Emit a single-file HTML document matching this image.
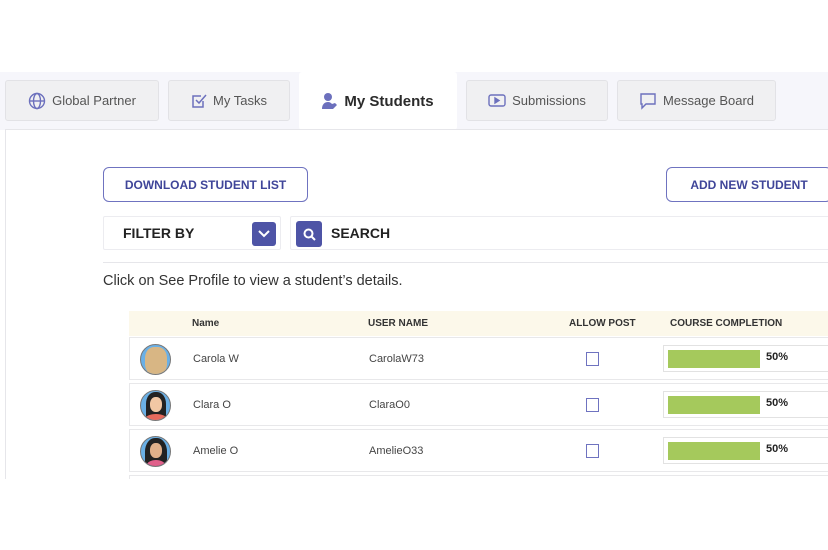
<!DOCTYPE html>
<html><head><meta charset="utf-8"><style>
*{box-sizing:border-box;margin:0;padding:0}
body{width:828px;height:550px;background:#fff;font-family:"Liberation Sans",sans-serif;position:relative;overflow:hidden}
.abs{position:absolute}
.bar{left:0;top:72px;width:828px;height:58px;background:#f6f6fb}
.tab{position:absolute;top:80px;height:41px;background:#f0f0f2;border:1px solid #e2e2e6;border-radius:3px;display:flex;align-items:center;justify-content:center;font-size:13px;color:#555;gap:6px}
.act{top:72px;height:58px;background:#fff;border:none;font-weight:bold;color:#2b2b2b;font-size:15px}
.panel{left:5px;top:129px;width:830px;height:350px;background:#fff;border-left:1px solid #e6e6ea;border-top:1px solid #e6e6ea}
.btn{position:absolute;top:167px;height:35px;border:1.5px solid #6f73c0;border-radius:6px;color:#3f4599;font-weight:bold;font-size:12px;display:flex;align-items:center;justify-content:center}
.box{position:absolute;top:216px;height:34px;border:1px solid #ececf0;border-radius:2px;font-weight:bold;font-size:14px;color:#222;display:flex;align-items:center}
.ib{background:#4e54a6;border-radius:3px;width:24px;height:24px;position:absolute;display:flex;align-items:center;justify-content:center}
.row{position:absolute;left:129px;width:710px;height:43px;border:1px solid #e8e8ea;font-size:11px;color:#444}
.row span{position:absolute;top:15px}
.cb{position:absolute;left:456px;top:14px;width:13px;height:14px;border:1.5px solid #6f73c0}
.pg{position:absolute;left:533px;top:7px;width:180px;height:27px;border:1px solid #e2e2e2}
.pg i{position:absolute;left:4px;top:4px;width:92px;height:18px;background:#a5c95c}
.pg b{position:absolute;left:102px;top:5px;font-size:11px;color:#222}
.av{position:absolute;left:10px;top:6px;width:31px;height:31px;border-radius:50%;background:#6ab0e6;border:1.5px solid #777;overflow:hidden}
</style></head><body>
<div class="abs bar"></div>
<div class="tab" style="left:5px;width:154px"><svg width="18" height="18" viewBox="0 0 18 18" fill="none" stroke="#6c70bd" stroke-width="1.4"><circle cx="9" cy="9" r="7.5"/><ellipse cx="9" cy="9" rx="3.5" ry="7.5"/><path d="M1.5 9h15"/></svg>Global Partner</div>
<div class="tab" style="left:168px;width:122px"><svg width="16" height="16" viewBox="0 0 16 16" fill="none" stroke="#6c70bd" stroke-width="1.5"><path d="M12 8v6H2V3h8"/><path d="M5 7l3 3 7-8"/></svg>My Tasks</div>
<div class="tab act" style="left:299px;width:158px"><svg width="16" height="18" viewBox="0 0 16 18" fill="#6c70bd"><circle cx="6" cy="5" r="4"/><path d="M0 17c0-5 3-7 6-7 2 0 3 1 4 2l3-1 2 2-4 4z"/></svg>My Students</div>
<div class="tab" style="left:466px;width:142px"><svg width="18" height="16" viewBox="0 0 18 16" fill="none" stroke="#6c70bd" stroke-width="1.4"><rect x="1" y="2" width="16" height="11" rx="2"/><path d="M7 5v5l4-2.5z" fill="#6c70bd"/></svg>Submissions</div>
<div class="tab" style="left:617px;width:159px"><svg width="18" height="18" viewBox="0 0 18 18" fill="none" stroke="#6c70bd" stroke-width="1.4"><path d="M2 2h14v10H7l-4 4v-4H2z"/></svg>Message Board</div>
<div class="abs panel"></div>
<div class="btn" style="left:103px;width:205px">DOWNLOAD STUDENT LIST</div>
<div class="btn" style="left:666px;width:166px">ADD NEW STUDENT</div>
<div class="box" style="left:103px;width:178px;padding-left:19px">FILTER BY<div class="ib" style="left:148px;top:5px"><svg width="12" height="8" viewBox="0 0 12 8" fill="none" stroke="#fff" stroke-width="2"><path d="M1 1l5 5 5-5"/></svg></div></div>
<div class="box" style="left:290px;width:560px;padding-left:40px">SEARCH<div class="ib" style="left:5px;top:4px;width:26px;height:26px"><svg width="13" height="13" viewBox="0 0 13 13" fill="none" stroke="#fff" stroke-width="2"><circle cx="5.5" cy="5.5" r="4"/><path d="M8.5 8.5L12 12"/></svg></div></div>
<div class="abs" style="left:103px;top:262px;width:730px;height:1px;background:#e6e6ea"></div>
<div class="abs" style="left:103px;top:273px;font-size:14.5px;color:#333">Click on See Profile to view a student’s details.</div>
<div class="abs" style="left:129px;top:311px;width:710px;height:25px;background:#fcf8ea;font-size:10px;font-weight:bold;color:#333">
<span class="abs" style="left:63px;top:7px">Name</span><span class="abs" style="left:239px;top:7px">USER NAME</span><span class="abs" style="left:440px;top:7px">ALLOW POST</span><span class="abs" style="left:541px;top:7px">COURSE COMPLETION</span></div>
<div class="row" style="top:337px"><div class="av" style="background:#6ab0e6"><div style="position:absolute;left:4px;top:2px;width:22px;height:28px;background:#d8b684;border-radius:40%"></div></div><span style="left:63px">Carola W</span><span style="left:239px">CarolaW73</span><div class="cb"></div><div class="pg"><i></i><b>50%</b></div></div>
<div class="row" style="top:383px"><div class="av"><div style="position:absolute;left:5px;top:1px;width:20px;height:26px;background:#222;border-radius:45% 45% 10% 10%"></div><div style="position:absolute;left:9px;top:6px;width:12px;height:15px;background:#f1c7a4;border-radius:45%"></div><div style="position:absolute;left:4px;top:23px;width:22px;height:10px;background:#e86a5c;border-radius:50% 50% 0 0"></div></div><span style="left:63px">Clara O</span><span style="left:239px">ClaraO0</span><div class="cb"></div><div class="pg"><i></i><b>50%</b></div></div>
<div class="row" style="top:429px"><div class="av"><div style="position:absolute;left:4px;top:1px;width:22px;height:30px;background:#222;border-radius:45% 45% 10% 10%"></div><div style="position:absolute;left:9px;top:6px;width:12px;height:15px;background:#e0b08a;border-radius:45%"></div><div style="position:absolute;left:6px;top:23px;width:18px;height:10px;background:#e0608a;border-radius:50% 50% 0 0"></div></div><span style="left:63px">Amelie O</span><span style="left:239px">AmelieO33</span><div class="cb"></div><div class="pg"><i></i><b>50%</b></div></div>
<div class="abs" style="left:129px;top:475px;width:710px;height:4px;border:1px solid #e8e8ea;border-bottom:none"></div>
</body></html>
